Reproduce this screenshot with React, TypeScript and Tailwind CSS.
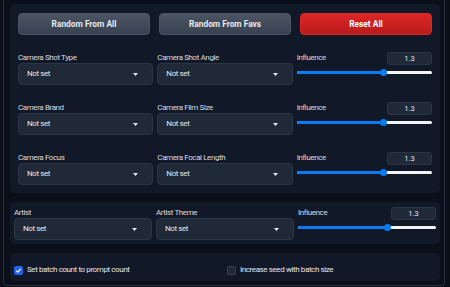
import React from "react";

const font = { fontFamily: "Roboto, 'Liberation Sans', sans-serif" };

function Dropdown({ label }: { label: string }) {
  return (
    <div className="flex flex-col">
      <div className="h-[11px] leading-[11px] text-[8px] tracking-[-0.4px] text-[#d7dbe1]">{label}</div>
      <div className="h-[22px] rounded-[4px] bg-[#1f2937] border border-[#2b3545] flex items-center justify-between pl-[8px] pr-[14px]">
        <span className="text-[8px] tracking-[-0.4px] text-[#e5e7eb]">Not set</span>
        <svg width="5" height="3" viewBox="0 0 5 3">
          <polygon points="0,0 5,0 2.5,3" fill="#e5e7eb" />
        </svg>
      </div>
    </div>
  );
}

function Influence() {
  return (
    <div className="flex flex-col">
      <div className="flex items-center justify-between h-[13px]">
        <span className="text-[8px] tracking-[-0.4px] text-[#d7dbe1] leading-[11px] self-start">Influence</span>
        <div className="w-[45px] h-[13px] rounded-[3px] bg-[#1f2937] border border-[#2b3545] flex items-center justify-center text-[7.5px] text-[#e5e7eb]">
          1.3
        </div>
      </div>
      <div className="relative h-[7px] mt-[4px] flex items-center">
        <div className="relative w-full h-[3px] rounded-full bg-[#f3f4f6]">
          <div className="absolute left-0 top-0 h-[3px] w-[64.5%] rounded-full bg-[#0b7bf5]" />
        </div>
        <div className="absolute left-[64.5%] top-0 -ml-[3.5px] w-[7px] h-[7px] rounded-full bg-[#0b7bf5]" />
      </div>
    </div>
  );
}

function Row({ a, b }: { a: string; b: string }) {
  return (
    <div className="grid grid-cols-3 gap-[4px]">
      <Dropdown label={a} />
      <Dropdown label={b} />
      <Influence />
    </div>
  );
}

function Check({ checked, label }: { checked: boolean; label: string }) {
  return (
    <div className="flex items-center gap-[4px]">
      {checked ? (
        <div className="w-[9px] h-[9px] rounded-[2px] bg-[#2563eb] flex items-center justify-center">
          <svg width="7" height="7" viewBox="0 0 8 8">
            <path d="M1.5 4.2 L3.2 5.8 L6.5 2.2" stroke="white" strokeWidth="1.3" fill="none" />
          </svg>
        </div>
      ) : (
        <div className="w-[9px] h-[9px] rounded-[2px] bg-[#1f2937] border border-[#374151]" />
      )}
      <span className="text-[8px] tracking-[-0.4px] text-[#e5e7eb]">{label}</span>
    </div>
  );
}

export default function App() {
  return (
    <div className="w-[450px] h-[287px] bg-[#0b0f19] overflow-hidden" style={font}>
      <div className="ml-[3px] w-[442px] border-l border-r border-b border-[#273041] rounded-b-[5px] pt-[4px] pb-[4px] pl-[6px] pr-[4px] flex flex-col gap-[9px]">
        <div className="rounded-[5px] bg-[#111827] pt-[9px] pb-[8px] px-[8px] flex flex-col gap-[17px]">
          <div className="grid grid-cols-3 gap-[9px]">
            <div className="h-[22px] rounded-[4px] bg-gradient-to-b from-[#4b5563] to-[#374151] border border-[#4b5563] flex items-center justify-center text-[8.4px] font-bold text-[#e5e7eb]">
              Random From All
            </div>
            <div className="h-[22px] rounded-[4px] bg-gradient-to-b from-[#4b5563] to-[#374151] border border-[#4b5563] flex items-center justify-center text-[8.4px] font-bold text-[#e5e7eb]">
              Random From Favs
            </div>
            <div className="h-[22px] rounded-[4px] bg-gradient-to-b from-[#dc2626] to-[#b91c1c] border border-[#dc2626] flex items-center justify-center text-[8.4px] font-bold text-white">
              Reset All
            </div>
          </div>
          <Row a="Camera Shot Type" b="Camera Shot Angle" />
          <Row a="Camera Brand" b="Camera Film Size" />
          <Row a="Camera Focus" b="Camera Focal Length" />
        </div>
        <div className="rounded-[5px] bg-[#111827] pt-[5px] pb-[4px] px-[4px]">
          <Row a="Artist" b="Artist Theme" />
        </div>
        <div className="rounded-[5px] bg-[#111827] pt-[11px] pb-[5px] px-[4px] grid grid-cols-2 gap-[4px]">
          <Check checked label="Set batch count to prompt count" />
          <Check checked={false} label="Increase seed with batch size" />
        </div>
      </div>
    </div>
  );
}
